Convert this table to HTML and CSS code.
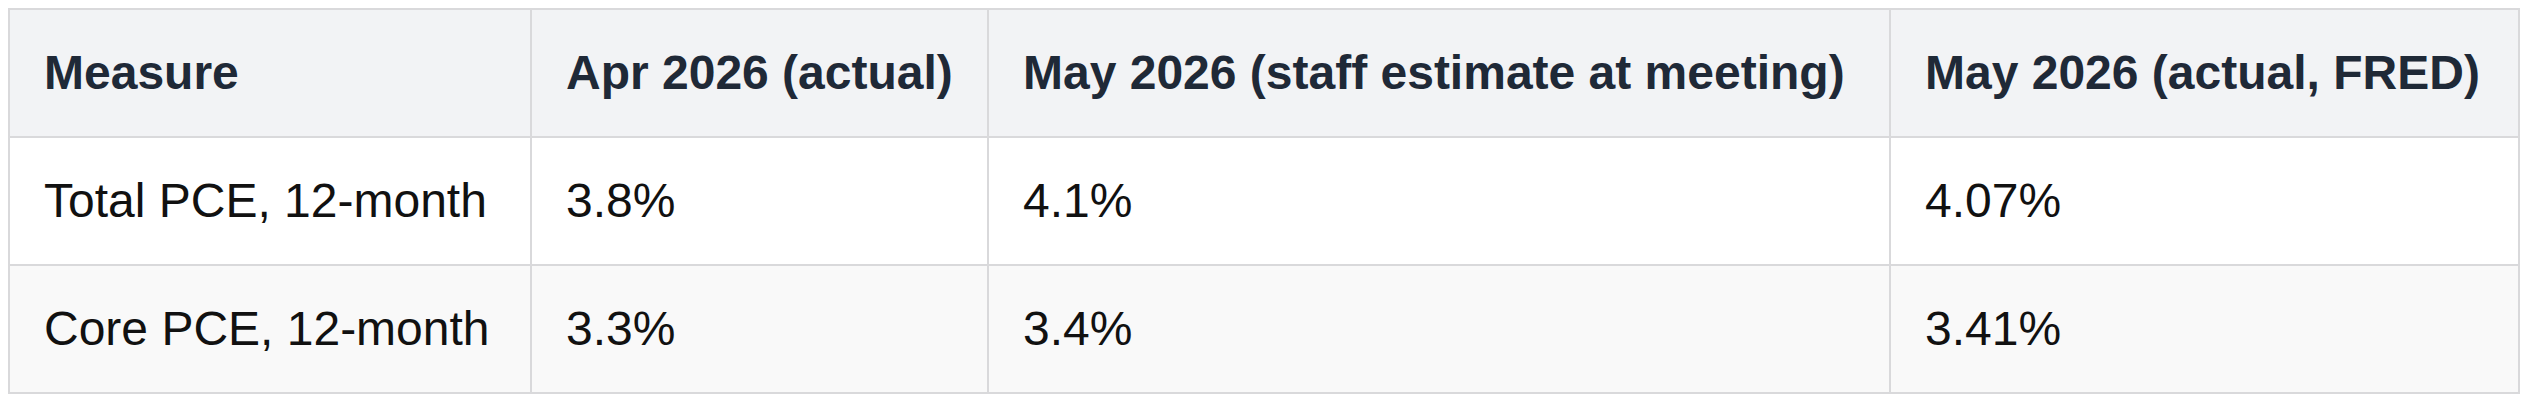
FILE: index.html
```html
<!DOCTYPE html>
<html lang="en">
<head>
<meta charset="utf-8">
<title>PCE inflation</title>
<link rel="stylesheet" href="styles.css">
</head>
<body>
<table class="data-table">
  <colgroup>
    <col class="col-measure">
    <col class="col-apr">
    <col class="col-est">
    <col class="col-act">
  </colgroup>
  <thead>
    <tr>
      <th>Measure</th>
      <th>Apr 2026 (actual)</th>
      <th>May 2026 (staff estimate at meeting)</th>
      <th>May 2026 (actual, FRED)</th>
    </tr>
  </thead>
  <tbody>
    <tr>
      <td>Total PCE, 12-month</td>
      <td>3.8%</td>
      <td>4.1%</td>
      <td>4.07%</td>
    </tr>
    <tr class="alt">
      <td>Core PCE, 12-month</td>
      <td>3.3%</td>
      <td>3.4%</td>
      <td>3.41%</td>
    </tr>
  </tbody>
</table>
</body>
</html>
```
FILE: styles.css
```css
html, body {
  margin: 0;
  padding: 0;
  background: #ffffff;
}
body {
  padding: 8px;
  font-family: "Liberation Sans", Arial, Helvetica, sans-serif;
}
.data-table {
  width: 100%;
  border-collapse: collapse;
  table-layout: fixed;
  font-size: 48px;
  line-height: 72px;
  color: #111111;
}
.col-measure { width: 522px; }
.col-apr { width: 457px; }
.col-est { width: 902px; }
.col-act { width: 629px; }
.data-table th,
.data-table td {
  border: 2px solid #d9d9db;
  padding: 27px 32px 27px 34px;
  text-align: left;
  white-space: nowrap;
}
.data-table th {
  background: #f2f3f5;
  color: #1f2937;
  font-weight: 700;
}
.data-table td {
  background: #ffffff;
}
.data-table tr.alt td {
  background: #f9f9f9;
}
```
